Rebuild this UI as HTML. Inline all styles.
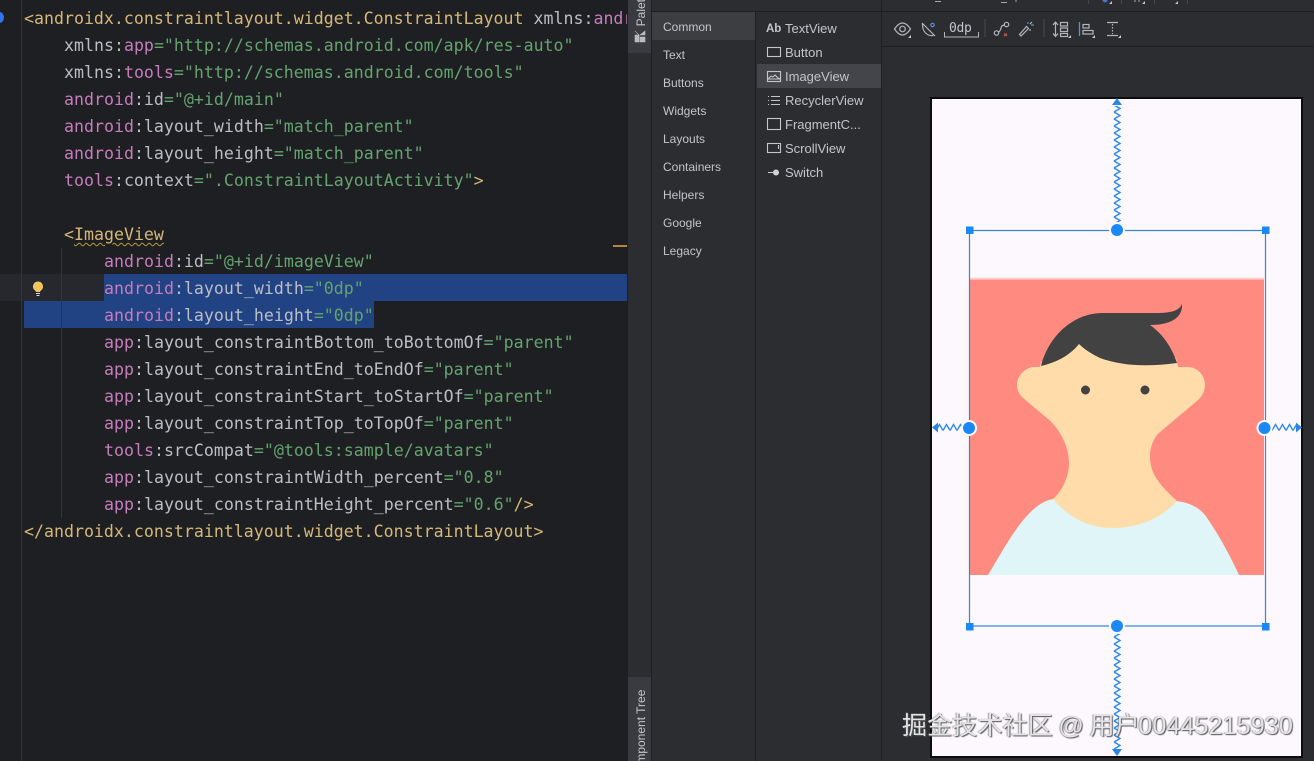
<!DOCTYPE html>
<html><head><meta charset="utf-8"><style>
html,body{margin:0;padding:0;width:1314px;height:761px;overflow:hidden;background:#1e1f22}
.a{position:absolute}
.c{position:absolute;white-space:pre;font:16.6px/27px "DejaVu Sans Mono",monospace;color:#bcbec4;height:27px}
.t{color:#d5b778}.n{color:#c77dbb}.v{color:#64a36e}
.p{position:absolute;white-space:pre;font:12px/16px "Liberation Sans",sans-serif;color:#c3c5ca}
.q{position:absolute;white-space:pre;font:13px/16px "Liberation Sans",sans-serif;color:#c3c5ca}
</style></head><body>
<div class="a" style="left:0;top:0;width:1314px;height:761px;overflow:hidden">
<!-- editor -->
<div class="a" style="left:0;top:0;width:627px;height:761px;background:#1e1f22"></div>
<div class="a" style="left:0;top:274px;width:104px;height:27px;background:#26282e"></div>
<div class="a" style="left:104px;top:274px;width:523px;height:27px;background:#214283"></div>
<div class="a" style="left:24px;top:301px;width:350px;height:27px;background:#214283"></div>
<div class="a" style="left:21px;top:0;width:1px;height:761px;background:#313438"></div>
<div class="a" style="left:61px;top:248px;width:1px;height:270px;background:#313438"></div>
<div class="a" style="left:-5px;top:12px;width:9px;height:11px;border-radius:50%;background:#3574f0"></div>
<div class="a" style="left:613px;top:245px;width:14px;height:2px;background:#b08a3c"></div>
<svg class="a" style="left:30px;top:280px" width="16" height="17" viewBox="0 0 16 17"><path d="M8 1.500a5 5 0 0 0-3 9c.7.6.9 1 1 1.500h4c.1-.5.3-.9 1-1.500a5 5 0 0 0-3-9z" fill="#f2c55c"/><path d="M6 13.500h4M6.500 15.500h3" stroke="#d8d8d8" stroke-width="1"/></svg>
<div class="c" style="left:24px;top:5px"><span class="t">&lt;androidx.constraintlayout.widget.ConstraintLayout</span> xmlns:<span class="n">andr</span></div>
<div class="c" style="left:64px;top:32px">xmlns:<span class="n">app</span><span class="v">="http://schemas.android.com/apk/res-auto"</span></div>
<div class="c" style="left:64px;top:59px">xmlns:<span class="n">tools</span><span class="v">="http://schemas.android.com/tools"</span></div>
<div class="c" style="left:64px;top:86px"><span class="n">android</span>:id<span class="v">="@+id/main"</span></div>
<div class="c" style="left:64px;top:113px"><span class="n">android</span>:layout_width<span class="v">="match_parent"</span></div>
<div class="c" style="left:64px;top:140px"><span class="n">android</span>:layout_height<span class="v">="match_parent"</span></div>
<div class="c" style="left:64px;top:167px"><span class="n">tools</span>:context<span class="v">=".ConstraintLayoutActivity"</span><span class="t">&gt;</span></div>
<div class="c" style="left:64px;top:221px"><span class="t">&lt;<span style="text-decoration:underline wavy #b8993f 1px;text-underline-offset:2px">ImageView</span></span></div>
<div class="c" style="left:104px;top:248px"><span class="n">android</span>:id<span class="v">="@+id/imageView"</span></div>
<div class="c" style="left:104px;top:275px"><span class="n">android</span>:layout_width<span class="v">="0dp"</span></div>
<div class="c" style="left:104px;top:302px"><span class="n">android</span>:layout_height<span class="v">="0dp"</span></div>
<div class="c" style="left:104px;top:329px"><span class="n">app</span>:layout_constraintBottom_toBottomOf<span class="v">="parent"</span></div>
<div class="c" style="left:104px;top:356px"><span class="n">app</span>:layout_constraintEnd_toEndOf<span class="v">="parent"</span></div>
<div class="c" style="left:104px;top:383px"><span class="n">app</span>:layout_constraintStart_toStartOf<span class="v">="parent"</span></div>
<div class="c" style="left:104px;top:410px"><span class="n">app</span>:layout_constraintTop_toTopOf<span class="v">="parent"</span></div>
<div class="c" style="left:104px;top:437px"><span class="n">tools</span>:srcCompat<span class="v">="@tools:sample/avatars"</span></div>
<div class="c" style="left:104px;top:464px"><span class="n">app</span>:layout_constraintWidth_percent<span class="v">="0.8"</span></div>
<div class="c" style="left:104px;top:491px"><span class="n">app</span>:layout_constraintHeight_percent<span class="v">="0.6"</span><span class="t">/&gt;</span></div>
<div class="c" style="left:24px;top:518px"><span class="t">&lt;/androidx.constraintlayout.widget.ConstraintLayout&gt;</span></div>

<!-- right side panels -->
<div class="a" style="left:627px;top:0;width:687px;height:761px;background:#2b2d30"></div>
<div class="a" style="left:627px;top:0;width:1px;height:761px;background:#1e1f22"></div>
<div class="a" style="left:628px;top:0;width:23px;height:53px;background:#393b40"></div>
<div class="a" style="left:628px;top:677px;width:23px;height:84px;background:#393b40"></div>
<div class="a" style="left:651px;top:0;width:1px;height:761px;background:#1e1f22"></div>
<div class="a" style="left:651px;top:11px;width:663px;height:1px;background:#1e1f22"></div>
<div class="a" style="left:755px;top:12px;width:1px;height:749px;background:#1e1f22"></div>
<div class="a" style="left:881px;top:0;width:1px;height:761px;background:#1e1f22"></div>
<div class="a" style="left:882px;top:46px;width:432px;height:1px;background:#1e1f22"></div>
<div class="a" style="left:652px;top:12px;width:103px;height:28px;background:#3c3e42"></div>
<div class="a" style="left:757px;top:64px;width:124px;height:24px;background:#43454a"></div>

<div class="a" style="left:633px;top:0;width:16px;height:26px;overflow:hidden"><div class="a" style="left:0;bottom:0;white-space:pre;font:12px/16px 'Liberation Sans',sans-serif;color:#c3c5ca;writing-mode:vertical-rl;transform:rotate(180deg)">Palette</div></div>
<svg class="a" style="left:634px;top:30px" width="12" height="13" viewBox="0 0 12 13"><path d="M1 1l4 4M1 5h4v7H1zM6 7h5v5H6zM6 5l5-4v4z" fill="#b9bbc0" stroke="#b9bbc0" stroke-width=".6"/></svg>
<div class="a" style="left:633px;top:688px;width:16px;height:73px;overflow:hidden"><div class="a" style="left:0;top:0;white-space:pre;font:12px/16px 'Liberation Sans',sans-serif;color:#c3c5ca;writing-mode:vertical-rl;transform:rotate(180deg);height:91px">Component Tree</div></div>

<div class="p" style="left:663px;top:19px">Common</div>
<div class="p" style="left:663px;top:47px">Text</div>
<div class="p" style="left:663px;top:75px">Buttons</div>
<div class="p" style="left:663px;top:103px">Widgets</div>
<div class="p" style="left:663px;top:131px">Layouts</div>
<div class="p" style="left:663px;top:159px">Containers</div>
<div class="p" style="left:663px;top:187px">Helpers</div>
<div class="p" style="left:663px;top:215px">Google</div>
<div class="p" style="left:663px;top:243px">Legacy</div>

<div class="a" style="left:766px;top:21px;white-space:pre;font:bold 11.500px/16px 'Liberation Sans',sans-serif;color:#c3c5ca">Ab</div>
<div class="q" style="left:785px;top:21px">TextView</div>
<div class="q" style="left:785px;top:45px">Button</div>
<div class="q" style="left:785px;top:69px">ImageView</div>
<div class="q" style="left:785px;top:93px">RecyclerView</div>
<div class="q" style="left:785px;top:117px">FragmentC...</div>
<div class="q" style="left:785px;top:141px">ScrollView</div>
<div class="q" style="left:785px;top:165px">Switch</div>
<svg class="a" style="left:760px;top:40px" width="28" height="145" viewBox="760 40 28 145" fill="none" stroke="#c3c5ca" stroke-width="1.100">
<rect x="767.500" y="47.500" width="13" height="9"/>
<rect x="767.500" y="71.500" width="13" height="10"/><path d="M768 79l3-3 2 1 2-2 3 3 2 1M768 79h12"/>
<path d="M768 96.500h1M768 100.500h1M768 104.500h1M771 96.500h9M771 100.500h9M771 104.500h9"/>
<rect x="767.500" y="118.500" width="13" height="11"/>
<rect x="767.500" y="143.500" width="13" height="9"/><path d="M778.500 145v4"/>
<path d="M768 172.500h5"/><circle cx="776" cy="172.500" r="3" fill="#d0d2d6" stroke="none"/>
</svg>

<!-- top clipped toolbar fragments -->
<svg class="a" style="left:882px;top:0" width="432" height="12" viewBox="882 0 432 12" fill="none" stroke="#a8aab0" stroke-width="1">
<path d="M935 1.500h6M1001 2.500h6M1016 0v2"/>
<path d="M1088.500 0v4M1121.500 0v4M1154.500 0v4M1187.500 0v4" stroke="#43454a"/>
<circle cx="1105" cy="0" r="2.500" fill="#4a78c8" stroke="none"/>
<path d="M1112 4h-3l3-3zM1145 4h-3l3-3zM1178 4h-3l3-3z" fill="#c8c8c8" stroke="none"/>
<path d="M1134 1h2M1138 1h2"/>
</svg>
<!-- toolbar -->
<svg class="a" style="left:882px;top:12px" width="432" height="34" viewBox="882 12 432 34" fill="none" stroke="#b4b6bb" stroke-width="1.200">
<path d="M894.500 29c3-4.500 6-6 8-6s5 1.500 8 6c-3 4.500-6 6-8 6s-5-1.500-8-6z"/><circle cx="902.500" cy="29" r="2.800"/>
<path d="M911 38h-3l3-3z" fill="#ccc" stroke="none"/>
<path d="M922.500 24c0 6 2 9 6 11 2 .8 4 .8 5 0M922 23l13 13"/><circle cx="932.500" cy="25" r="1.700" stroke="#5c8fd6"/>
<path d="M944.500 32v5h34v-5" stroke-width="1"/>
<path d="M985 19v18M1044 19v18" stroke="#43454a"/>
<circle cx="996.500" cy="33" r="2.200"/><circle cx="1006.500" cy="24.500" r="2.200"/><path d="M998.500 32c3-1 2-6 4-6.500l2.500-.5"/>
<path d="M1004 33.500l3 2.500M1007 33.500l-3 2.500" stroke="#c75450"/>
<path d="M1021 36l-1.500-1.500 7-8 2 2zM1030 29v2M1032 22l-2 2" /><path d="M1031 25h3M1028 22v2" stroke="#5c8fd6"/>
<path d="M1055.500 22.500v13.500M1053 25l2.500-3 2.500 3M1053 33.500l2.500 3 2.500-3"/>
<rect x="1060.500" y="22.500" width="7" height="3.500"/><rect x="1060.500" y="28" width="7" height="3.500"/><rect x="1060.500" y="33.500" width="7" height="3"/>
<path d="M1079.500 22v14" stroke="#5c8fd6" stroke-width="1.300"/>
<rect x="1083" y="24.500" width="6" height="3.500"/><rect x="1083" y="30.500" width="10" height="3.500"/>
<path d="M1107 22.500h11M1107 35.500h11"/><path d="M1112.500 24v10" stroke-dasharray="1.500 1.500"/>
<path d="M1071 38h-3l3-3zM1095 38h-3l3-3zM1121 38h-3l3-3z" fill="#ccc" stroke="none"/>
</svg>
<div class="a" style="left:949px;top:20px;white-space:pre;font:13px/18px 'DejaVu Sans Mono',monospace;color:#c3c5ca;letter-spacing:-.3px">0dp</div>

<!-- design surface -->
<div class="a" style="left:930px;top:97px;width:373px;height:661px;background:#0c0c0d"></div>
<div class="a" style="left:932px;top:99px;width:369px;height:657px;background:#fdf7fe"></div>
<svg class="a" style="left:0;top:0" width="1314" height="761" viewBox="0 0 1314 761">
<defs>
<linearGradient id="g" x1="0" y1="0" x2="0" y2="1"><stop offset="0" stop-color="#fdf7fe"/><stop offset="1" stop-color="#ff8a80"/></linearGradient>
<pattern id="zv" width="8" height="7" patternUnits="userSpaceOnUse" x="1113" y="105">
<path d="M1 0L7 3.500 1 7" fill="none" stroke="#2f8be8" stroke-width="1.500"/></pattern>
<pattern id="zh" width="7" height="8" patternUnits="userSpaceOnUse" x="936" y="423.500">
<path d="M0 7L3.500 1 7 7" fill="none" stroke="#2f8be8" stroke-width="1.400"/></pattern>
</defs>
<rect x="970" y="277" width="294" height="4" fill="url(#g)"/>
<rect x="970" y="280" width="294" height="295" fill="#ff8a80"/>
<path d="M988 575C1003 550 1018 522 1035 508 1041 503 1047 500 1053 499L1177 501C1190 503 1198 507 1205 515 1217 532 1229 553 1239 575Z" fill="#dff5f7"/>
<path d="M1032 367C1024 369 1017 376 1017 385 1017 391 1020 395 1023 398L1048 419C1060 429 1069 447 1069 463 1069 477 1062 491 1053 499 1070 519 1090 528 1113 528 1140 528 1161 518 1177 501 1167 491 1150 478 1150 457 1150 446 1154 437 1160 432L1197 401C1202 397 1205 391 1205 385 1205 375 1197 367 1188 367L1178 367 1176 358 1079 340 1041 362 1040 367Z" fill="#ffdcaa"/>
<path d="M1041 366C1049 335 1074 313 1103 313L1155 313C1168 313 1179 312 1182 304 1183 318 1170 325 1150 325 1163 334 1172 348 1177 363 1147 367 1122 366 1100 358 1092 354 1085 350 1079 344 1070 355 1058 362 1041 366Z" fill="#424242"/>
<circle cx="1085.500" cy="390" r="4.500" fill="#424242"/><circle cx="1145" cy="390" r="4.500" fill="#424242"/>

<!-- zigzags -->
<rect x="1113" y="106" width="8" height="117" fill="url(#zv)"/>
<rect x="1113" y="634" width="8" height="115" fill="url(#zv)"/>
<rect x="936" y="423.500" width="26" height="8" fill="url(#zh)"/>
<rect x="1272" y="423.500" width="24" height="8" fill="url(#zh)"/>
<path d="M1117 98l5 7h-10z" fill="#2a86e6"/><path d="M1117 756l5-7h-10z" fill="#2a86e6"/>
<path d="M932 427.500l6-5v10z" fill="#2a86e6"/><path d="M1302 427.500l-6-5v10z" fill="#2a86e6"/>

<!-- selection -->
<rect x="969.500" y="230.500" width="296" height="395.500" fill="none" stroke="#2f86dc" stroke-width="1.200"/>
<rect x="966" y="226.500" width="7.500" height="7.500" fill="#1a88f5"/><rect x="1262" y="226.500" width="7.500" height="7.500" fill="#1a88f5"/>
<rect x="966" y="623" width="7.500" height="7.500" fill="#1a88f5"/><rect x="1262" y="623" width="7.500" height="7.500" fill="#1a88f5"/>
<circle cx="1117" cy="230" r="8" fill="#fdf7fe"/><circle cx="1117" cy="230" r="6" fill="#1a88f5"/>
<circle cx="1117" cy="626" r="8" fill="#fdf7fe"/><circle cx="1117" cy="626" r="6" fill="#1a88f5"/>
<circle cx="969" cy="428" r="8" fill="#fdf7fe"/><circle cx="969" cy="428" r="6" fill="#1a88f5"/>
<circle cx="1264.500" cy="428" r="8" fill="#fdf7fe"/><circle cx="1264.500" cy="428" r="6" fill="#1a88f5"/>
</svg>

<!-- watermark -->
<div class="a" style="left:902px;top:710px;white-space:pre;font:25px/32px 'Liberation Sans','Noto Sans CJK SC',sans-serif;color:#e4e4e6;text-shadow:1px 1px 1px #555,-1px 0 1px rgba(90,90,90,.55);letter-spacing:.15px;word-spacing:-1.500px">掘金技术社区 @ 用户<span style="margin-left:-1.500px">00445215930</span></div>
</div>
</body></html>
